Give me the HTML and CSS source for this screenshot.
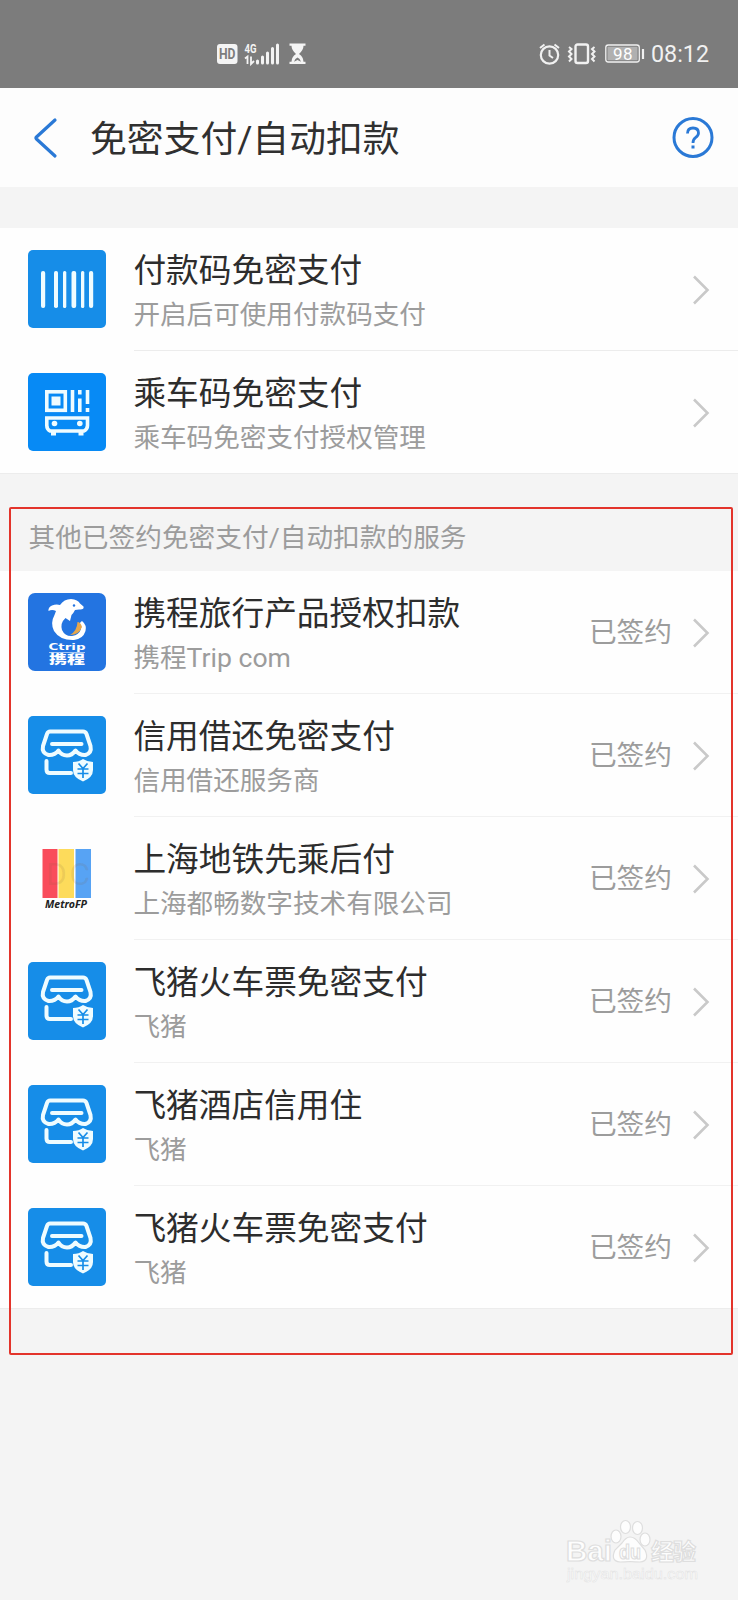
FILE: index.html
```html
<!DOCTYPE html>
<html lang="zh-CN">
<head>
<meta charset="utf-8">
<title>免密支付/自动扣款</title>
<link rel="stylesheet" href="styles.css">
</head>
<body>
<svg class="defs" width="0" height="0" aria-hidden="true">
  <symbol id="chevron" viewBox="0 0 18 30"><path d="M2 1.5 15.5 15 2 28.5" fill="none" stroke="#c9c9c9" stroke-width="2.6"/></symbol>
  <symbol id="shop" viewBox="0 0 78 78">
    <rect width="78" height="78" rx="5" fill="#168de8"/>
    <g fill="none" stroke="#effcff" stroke-width="4" stroke-linecap="round" stroke-linejoin="round">
      <path d="M22 15.500H55Q57.500 15.500 58.500 18L62.500 30Q64 37 57.500 39Q51.500 39.500 47.500 34.500Q44 39.500 39 39.500Q33.500 39.500 30.500 34.500Q26.500 39.500 20.500 39Q13.500 37 15 30L19 18Q20 15.500 22 15.500Z"/>
      <path d="M24 28H53.500M18.500 45V53.500Q18.500 57 22 57H43"/>
    </g>
    <path d="M55 43Q59.500 46 65 46V54Q65 61.500 55 65.500Q45 61.500 45 54V46Q51 46 55 43Z" fill="#effcff"/>
    <path d="M50.500 47.500 55 52.500 59.500 47.500M49.500 53H60.500M49.500 57.500H60.500M55 53V62" fill="none" stroke="#168de8" stroke-width="1.7"/>
  </symbol>
</svg>
<div class="page">
  <header class="status">
    <svg class="status-left" width="92" height="24" viewBox="0 0 92 24">
      <rect x="1" y="2" width="20.500" height="20" rx="3" fill="#f4f4f4"/>
      <text x="3" y="17" class="hd" textLength="16.500" lengthAdjust="spacingAndGlyphs">HD</text>
      <text x="28.500" y="10.500" class="net" textLength="12" lengthAdjust="spacingAndGlyphs">4G</text>
      <path d="M29 16.500 31.500 14.500V22M35 14.500V22L38 19" fill="none" stroke="#f4f4f4" stroke-width="1.800"/>
      <path d="M41.500 19V21M46.500 15V21M51.500 11V21M56.500 6.500V21M61.500 3V21" stroke="#f4f4f4" stroke-width="3" stroke-linecap="round"/>
      <path d="M73.500 1.500H89.500V3.800H87.500Q87.500 8 83 12Q87.500 15 87.500 19.700H89.500V22H73.500V19.700H75.500Q75.500 15 80 12Q75.500 8 75.500 3.800H73.500Z" fill="#f4f4f4"/>
      <path d="M78 19.700Q79 16.500 81.500 15.500Q84 16.500 85 19.700L81.500 18Z" fill="#7c7c7c"/>
    </svg>
    <div class="status-right">
      <svg width="108" height="24" viewBox="0 0 108 24">
        <g fill="none" stroke="#f1f1f1">
          <circle cx="11.500" cy="13" r="8.700" stroke-width="2.200"/>
          <path d="M11.500 8V13.500L15 16M2 6 6.500 2.500M21 6 16.500 2.500" stroke-width="2"/>
          <rect x="37.500" y="2.500" width="12.500" height="18.500" rx="2" stroke-width="2.400"/>
          <path d="M31 5 33.500 7 31 9.500 33.500 12 31 14.500 33.500 17 31 19.500M56.500 5 54 7 56.500 9.500 54 12 56.500 14.500 54 17 56.500 19.500" stroke-width="2"/>
          <rect x="67.800" y="3" width="33.500" height="17" rx="2.500" stroke-width="1.300"/>
          <path d="M105 7V17" stroke-width="2.200"/>
        </g>
        <rect x="69.500" y="4.700" width="30" height="13.600" fill="#b0b0b0"/>
        <text x="75" y="17.700" class="battery" textLength="19.500">98</text>
      </svg>
      <span class="clock">08:12</span>
    </div>
  </header>
  <nav class="bar">
    <svg class="back" width="26" height="42" viewBox="0 0 26 42"><path d="M22 3 3.500 20Q2.500 21 3.500 22L22 39" fill="none" stroke="#2a79d6" stroke-width="3.200" stroke-linecap="round"/></svg>
    <h1>免密支付/自动扣款</h1>
    <svg class="help" width="42" height="42" viewBox="0 0 42 42"><circle cx="21" cy="20.500" r="19" fill="none" stroke="#2a79d6" stroke-width="3"/><path d="M15.500 16.500Q15.500 11 21 11Q26.500 11 26.500 16Q26.500 18.500 23.500 20.700Q21 22.500 21 26" fill="none" stroke="#2a79d6" stroke-width="2.800"/><rect x="19.500" y="28.500" width="3" height="3" fill="#2a79d6"/></svg>
  </nav>
  <main>
    <section class="list">
      <div class="row">
        <svg class="logo" viewBox="0 0 78 78"><rect width="78" height="78" rx="5" fill="#168de8"/><g fill="#effcff"><rect x="13" y="21" width="4.200" height="37" rx="2"/><rect x="26" y="21" width="4" height="37" rx="1.800"/><rect x="35" y="21" width="3.300" height="37" rx="1.500"/><rect x="43.500" y="21" width="4.700" height="37" rx="2"/><rect x="53" y="21" width="3.300" height="37" rx="1.500"/><rect x="61" y="21" width="4.200" height="37" rx="2"/></g></svg>
        <div class="body"><div class="text"><h2>付款码免密支付</h2><p>开启后可使用付款码支付</p></div><svg class="chevron"><use href="#chevron"/></svg></div>
      </div>
      <div class="row">
        <svg class="logo" viewBox="0 0 78 78"><rect width="78" height="78" rx="5" fill="#078af5"/><g fill="none" stroke="#effcff" stroke-width="3.600"><rect x="18.800" y="18.800" width="18.500" height="18.500"/><path d="M44.500 17V39M51.800 17V21.500M51.800 25.500V39M59.500 17V31M59.500 35V39"/><path d="M18.800 45H59.500V52.500Q59.500 56 56 58H22Q18.800 56 18.800 52.500Z"/></g><g fill="#effcff"><rect x="23.500" y="23.500" width="9" height="9"/><circle cx="26.500" cy="50.500" r="2.800"/><circle cx="51.800" cy="50.500" r="2.800"/><path d="M23 58H28V62.500H23ZM50.500 58H55.500V62.500H50.500Z"/></g></svg>
        <div class="body"><div class="text"><h2>乘车码免密支付</h2><p>乘车码免密支付授权管理</p></div><svg class="chevron"><use href="#chevron"/></svg></div>
      </div>
    </section>
    <h3 class="caption">其他已签约免密支付/自动扣款的服务</h3>
    <section class="list signed">
      <div class="row">
        <svg class="logo" viewBox="0 0 78 78"><rect width="78" height="78" rx="7" fill="#2374e1"/><path d="M20.500 18Q20 14 24 12.500Q28 11 32 12Q36 6 43 6Q50 6.500 52 10.500L55.500 13.500Q56.500 17 51 16.500L47 17Q45 21 43.500 22L42 28L37.500 25Q32 30 34 37Q37 43.500 44 43Q51 42 53 36Q50 30 54 28Q59 32 57.500 38Q55 46 46 47Q32 47.500 26 38Q22 30 26.500 22L28 18Q24 16 20.500 18Z" fill="#fff"/><path d="M49.500 29Q49 38 42 42Q51 42 54 34Q52.500 29 49.500 29Z" fill="#e6a64b"/><path d="M36 30Q36 37 41 41" fill="none" stroke="#2374e1" stroke-width="1"/><circle cx="46" cy="12.500" r="1.200" fill="#2374e1"/><text x="20.500" y="57" class="ctrip" textLength="37" lengthAdjust="spacingAndGlyphs">Ctrip</text><path d="M21 59.500H57" stroke="#fff" stroke-width=".6"/><text x="21" y="71" class="xiecheng" textLength="36" lengthAdjust="spacingAndGlyphs">携程</text></svg>
        <div class="body"><div class="text"><h2>携程旅行产品授权扣款</h2><p>携程Trip com</p></div><span class="state">已签约</span><svg class="chevron"><use href="#chevron"/></svg></div>
      </div>
      <div class="row">
        <svg class="logo"><use href="#shop"/></svg>
        <div class="body"><div class="text"><h2>信用借还免密支付</h2><p>信用借还服务商</p></div><span class="state">已签约</span><svg class="chevron"><use href="#chevron"/></svg></div>
      </div>
      <div class="row">
        <svg class="logo" viewBox="0 0 78 78"><rect x="14.500" y="10" width="15" height="49" fill="#f94c5b"/><rect x="30.500" y="10" width="15.500" height="49" fill="#fddb5b"/><rect x="47.500" y="10" width="15.500" height="49" fill="#57a3f4"/><text x="18" y="46" class="dc" textLength="44">DC</text><text x="17" y="69" class="metro" textLength="42" lengthAdjust="spacingAndGlyphs">MetroFP</text></svg>
        <div class="body"><div class="text"><h2>上海地铁先乘后付</h2><p>上海都畅数字技术有限公司</p></div><span class="state">已签约</span><svg class="chevron"><use href="#chevron"/></svg></div>
      </div>
      <div class="row">
        <svg class="logo"><use href="#shop"/></svg>
        <div class="body"><div class="text"><h2>飞猪火车票免密支付</h2><p>飞猪</p></div><span class="state">已签约</span><svg class="chevron"><use href="#chevron"/></svg></div>
      </div>
      <div class="row">
        <svg class="logo"><use href="#shop"/></svg>
        <div class="body"><div class="text"><h2>飞猪酒店信用住</h2><p>飞猪</p></div><span class="state">已签约</span><svg class="chevron"><use href="#chevron"/></svg></div>
      </div>
      <div class="row">
        <svg class="logo"><use href="#shop"/></svg>
        <div class="body"><div class="text"><h2>飞猪火车票免密支付</h2><p>飞猪</p></div><span class="state">已签约</span><svg class="chevron"><use href="#chevron"/></svg></div>
      </div>
    </section>
  </main>
  <div class="highlight"></div>
  <svg class="watermark" width="140" height="70" viewBox="0 0 140 70">
    <g fill="#fdfdfd" stroke="#dedede" stroke-width="1.200">
      <text x="0" y="42" class="wm-main" textLength="46" lengthAdjust="spacingAndGlyphs">Bai</text>
      <ellipse cx="50" cy="17.500" rx="5" ry="6.500"/><ellipse cx="59.500" cy="8" rx="5" ry="6.500"/><ellipse cx="71.500" cy="9" rx="5" ry="6.500"/><ellipse cx="79" cy="20.500" rx="5" ry="6.500"/>
      <path d="M64 18Q69 18 73 24L79 31Q84 42 74 43Q69 43 64 42.500Q59 43 54 43Q44 42 49 31L56 24Q60 18 64 18Z"/>
      <text x="53" y="40" class="wm-du" textLength="22" lengthAdjust="spacingAndGlyphs">du</text>
      <text x="85" y="41" class="wm-cn" textLength="45">经验</text>
    </g>
    <text x="1" y="60" class="wm-url" textLength="131" lengthAdjust="spacingAndGlyphs">jingyan.baidu.com</text>
  </svg>
</div>
</body>
</html>
```
FILE: styles.css
```css
* { box-sizing: border-box; }
body { margin: 0; font-family: Roboto, "Noto Sans CJK SC", sans-serif; background: #f4f4f4; }
h1, h2, h3, p { margin: 0; font-weight: 400; white-space: nowrap; }
.defs { display: none; }
.page { position: relative; width: 738px; height: 1600px; overflow: hidden; }
.status { height: 88px; padding: 42px 29px 0 216px; background: #7c7c7c; display: flex; justify-content: space-between; align-items: flex-start; }
.status-right { display: flex; gap: 5px; }
.clock { color: #f1f1f1; font-size: 23.3px; line-height: 25px; width: 58px; }
.hd { font: bold 14px Roboto, sans-serif; fill: #7c7c7c; }
.net { font: bold 12.5px Roboto, sans-serif; fill: #f4f4f4; }
.battery { font: 400 17px Roboto, sans-serif; fill: #fff; }
.bar { height: 99px; padding: 0 24px 0 33px; background: #fdfdfd; display: flex; align-items: center; }
.bar h1 { flex: 1; margin-left: 31px; padding-top: 4px; font-size: 36.8px; line-height: 50px; color: #303030; }
.bar + main { padding-top: 41px; }
.list { background: #fefefe; border-bottom: 1px solid #ececec; }
.row { height: 123px; padding-left: 28.4px; display: flex; align-items: flex-start; }
.logo { width: 78px; height: 78px; margin-top: 22px; flex: none; }
.body { flex: 1; height: 123px; margin-left: 27.6px; padding-right: 28px; display: flex; align-items: center; border-bottom: 1px solid #ececec; }
.signed .body { border-bottom-color: #f1f1f1; }
.row:last-child, .row:last-child .body { height: 122px; border-bottom: 0; }
.text { flex: 1; align-self: flex-start; padding-top: 21px; margin-left: -0.6px; }
.text h2 { font-size: 32.7px; line-height: 44px; color: #2d2d2d; }
.text p { font-size: 26.6px; line-height: 44px; color: #9c9c9c; }
.state { font-size: 27.7px; line-height: 40px; padding-top: 2px; color: #9c9c9c; margin-right: 20px; }
.chevron { width: 18px; height: 30px; margin-top: 2px; flex: none; }
.caption { height: 97px; padding: 44px 0 0 28.5px; font-size: 26.7px; line-height: 40px; color: #9c9c9c; }
.ctrip { font: bold 9.5px "DejaVu Sans", sans-serif; fill: #fff; }
.xiecheng { font: 900 12px "Noto Sans CJK SC", sans-serif; fill: #fff; }
.dc { font: 32px Roboto, sans-serif; fill: #806040; fill-opacity: .13; }
.metro { font: italic bold 10.5px "Noto Sans", sans-serif; fill: #222; }
.highlight { position: absolute; left: 9px; top: 507px; width: 724px; height: 848px; border: 2px solid #e3342b; border-radius: 2px; }
.watermark { position: absolute; left: 566px; top: 1519px; }
.wm-main { font: bold 29px "Liberation Sans", sans-serif; }
.wm-du { font: bold 21px "Liberation Sans", sans-serif; }
.wm-cn { font: bold 23px "Noto Sans CJK SC", sans-serif; }
.wm-url { font: 15px "Liberation Sans", sans-serif; fill: #fdfdfd; stroke: #e2e2e2; stroke-width: .5; }
```
